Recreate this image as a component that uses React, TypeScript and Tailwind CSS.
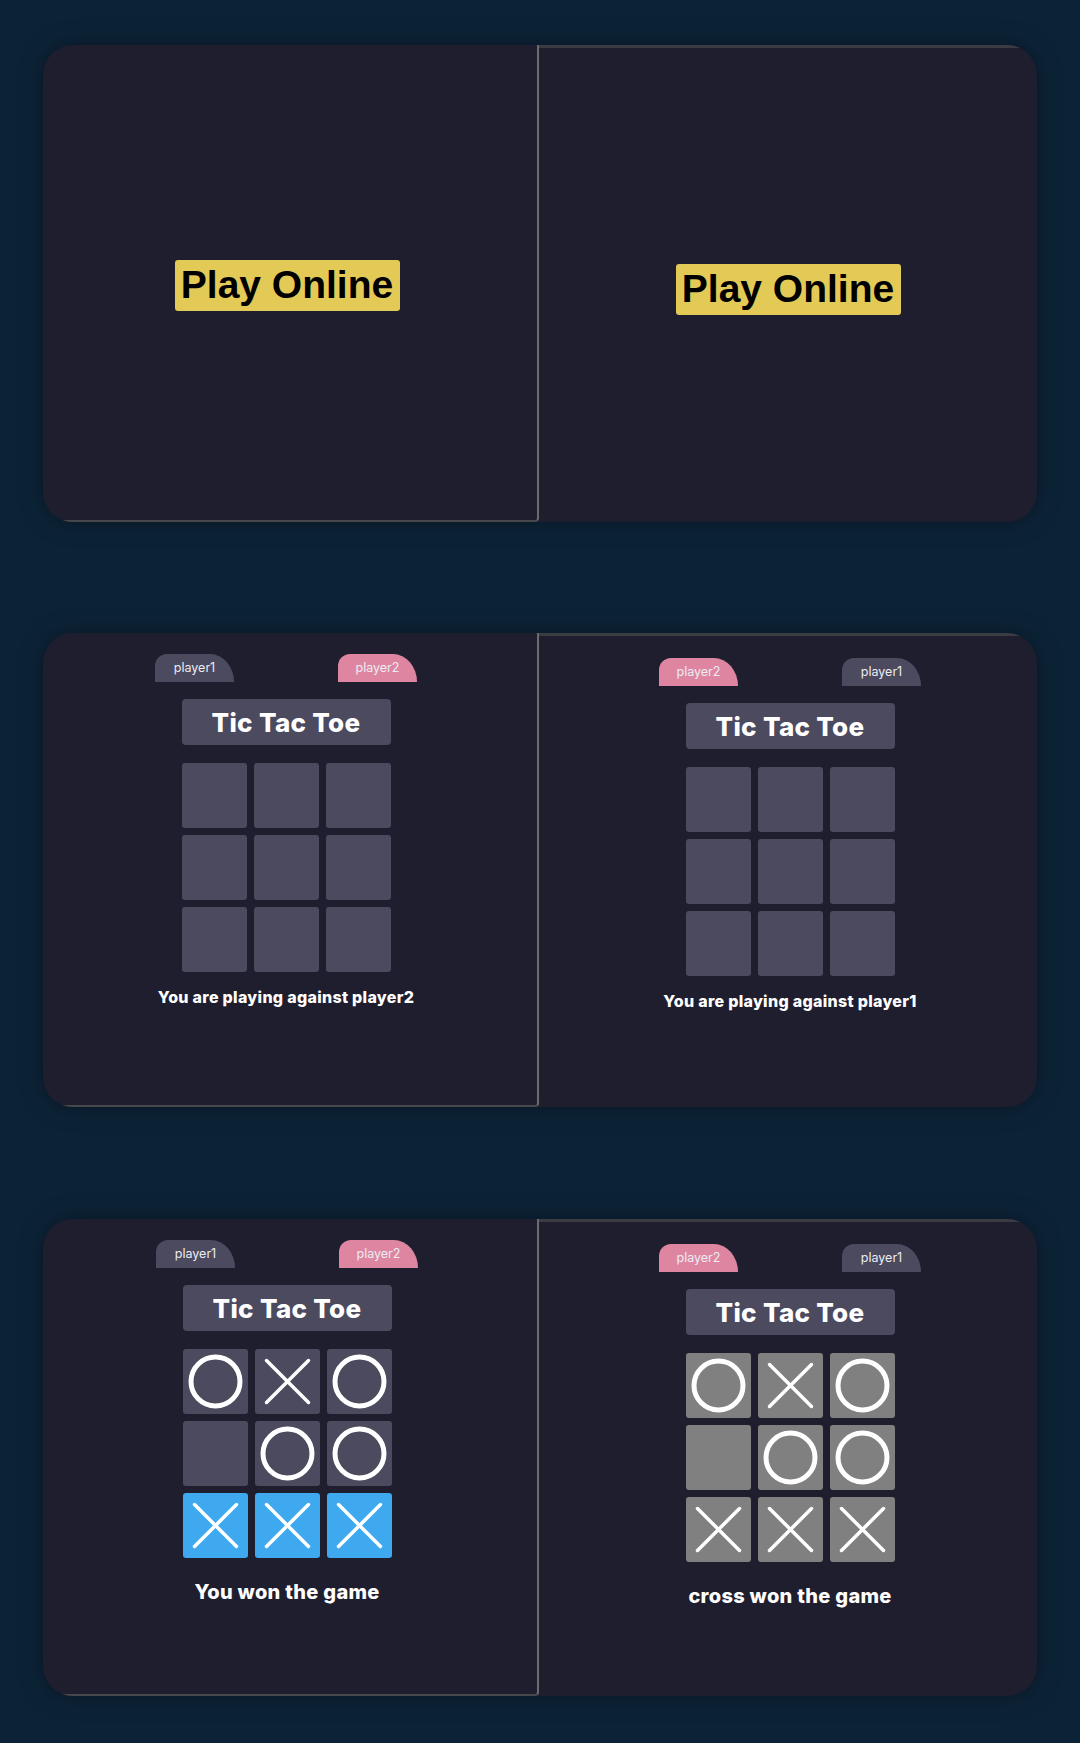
import React from "react";

type Cell = "" | "O" | "X";

const O = () => (
  <svg width="65" height="65" viewBox="0 0 65 65">
    <circle cx="32.5" cy="32.5" r="24.5" fill="none" stroke="white" strokeWidth="5" />
  </svg>
);

const X = () => (
  <svg width="65" height="65" viewBox="0 0 65 65">
    <line x1="11.5" y1="11.5" x2="53.5" y2="53.5" stroke="white" strokeWidth="3.5" strokeLinecap="round" />
    <line x1="53.5" y1="11.5" x2="11.5" y2="53.5" stroke="white" strokeWidth="3.5" strokeLinecap="round" />
  </svg>
);

const Tab = ({ label, pink }: { label: string; pink?: boolean }) => (
  <div
    className={
      "w-[79px] h-[28px] flex items-center justify-center rounded-tl-[12px] rounded-tr-[24px_28px] text-[12.5px] text-[#ececf2] " +
      (pink ? "bg-[#de86a1]" : "bg-[#4b4a5f]")
    }
  >
    {label}
  </div>
);

const Board = ({
  cells,
  variant,
}: {
  cells: Cell[];
  variant: "empty" | "win" | "gray";
}) => (
  <div className="grid grid-cols-[65px_65px_65px] gap-[7px]">
    {cells.map((c, i) => {
      let bg = "bg-[#4b4a5f]";
      if (variant === "gray") bg = "bg-[#808080]";
      if (variant === "win" && i >= 6) bg = "bg-[#3ea9ee]";
      return (
        <div key={i} className={"w-[65px] h-[65px] rounded-[3px] " + bg}>
          {c === "O" ? <O /> : c === "X" ? <X /> : null}
        </div>
      );
    })}
  </div>
);

const Game = ({
  left,
  right,
  cells,
  variant,
  message,
  big,
}: {
  left: { label: string; pink?: boolean };
  right: { label: string; pink?: boolean };
  cells: Cell[];
  variant: "empty" | "win" | "gray";
  message: string;
  big?: boolean;
}) => (
  <div className="flex flex-col items-center">
    <div className="w-[262px] flex justify-between">
      <Tab {...left} />
      <Tab {...right} />
    </div>
    <div className="mt-[17px] w-[209px] h-[46px] rounded-[4px] bg-[#4b4a5f] flex items-center justify-center text-white font-extrabold text-[26px] tracking-[0.3px]">
      Tic Tac Toe
    </div>
    <div className="mt-[18px]">
      <Board cells={cells} variant={variant} />
    </div>
    <div
      className={
        "text-white font-extrabold " +
        (big
          ? "mt-[19px] text-[20px] leading-[30px] tracking-[0.3px]"
          : "mt-[13px] text-[16px] leading-[24px] tracking-[0.3px]")
      }
    >
      {message}
    </div>
  </div>
);

const Card = ({
  leftContent,
  rightContent,
  height,
}: {
  leftContent: React.ReactNode;
  rightContent: React.ReactNode;
  height: string;
}) => (
  <div
    className={
      "w-[994px] flex rounded-[30px] overflow-hidden bg-[#1f1e2e] shadow-[0_0_24px_rgba(0,0,0,0.35)] " + height
    }
  >
    <div className="w-[496px] border-r-2 border-b-2 border-r-[#6b6b6e] border-b-[#48484c] rounded-br-[4px] flex">
      {leftContent}
    </div>
    <div className="flex-1 border-t-[3px] border-t-[#3b3b44] flex">{rightContent}</div>
  </div>
);

const empty: Cell[] = ["", "", "", "", "", "", "", "", ""];
const finished: Cell[] = ["O", "X", "O", "", "O", "O", "X", "X", "X"];

export default function App() {
  return (
    <div
      className="w-[1080px] min-h-[1743px] bg-[#0c2337] pt-[45px] flex flex-col items-center"
      style={{ fontFamily: "Inter, 'Open Sans', 'Liberation Sans', sans-serif" }}
    >
      <Card
        height="h-[477px]"
        leftContent={
          <div className="flex-1 flex justify-center pt-[215px] pr-[6px]">
            <div className="w-[225px] h-[51px] bg-[#e3c956] rounded-[3px] flex items-center justify-center text-black font-bold text-[39px] [font-family:'Liberation_Sans',Arial,sans-serif]">
              Play Online
            </div>
          </div>
        }
        rightContent={
          <div className="flex-1 flex justify-center pt-[216px]">
            <div className="w-[225px] h-[51px] bg-[#e3c956] rounded-[3px] flex items-center justify-center text-black font-bold text-[39px] [font-family:'Liberation_Sans',Arial,sans-serif]">
              Play Online
            </div>
          </div>
        }
      />
      <div className="h-[111px]" />
      <Card
        height="h-[474px]"
        leftContent={
          <div className="flex-1 flex justify-center pt-[21px] pr-[8px]">
            <Game
              left={{ label: "player1" }}
              right={{ label: "player2", pink: true }}
              cells={empty}
              variant="empty"
              message="You are playing against player2"
            />
          </div>
        }
        rightContent={
          <div className="flex-1 flex justify-center pt-[22px] pl-[4px]">
            <Game
              left={{ label: "player2", pink: true }}
              right={{ label: "player1" }}
              cells={empty}
              variant="empty"
              message="You are playing against player1"
            />
          </div>
        }
      />
      <div className="h-[112px]" />
      <Card
        height="h-[477px]"
        leftContent={
          <div className="flex-1 flex justify-center pt-[21px] pr-[6px]">
            <Game
              left={{ label: "player1" }}
              right={{ label: "player2", pink: true }}
              cells={finished}
              variant="win"
              message="You won the game"
              big
            />
          </div>
        }
        rightContent={
          <div className="flex-1 flex justify-center pt-[22px] pl-[4px]">
            <Game
              left={{ label: "player2", pink: true }}
              right={{ label: "player1" }}
              cells={finished}
              variant="gray"
              message="cross won the game"
              big
            />
          </div>
        }
      />
    </div>
  );
}
